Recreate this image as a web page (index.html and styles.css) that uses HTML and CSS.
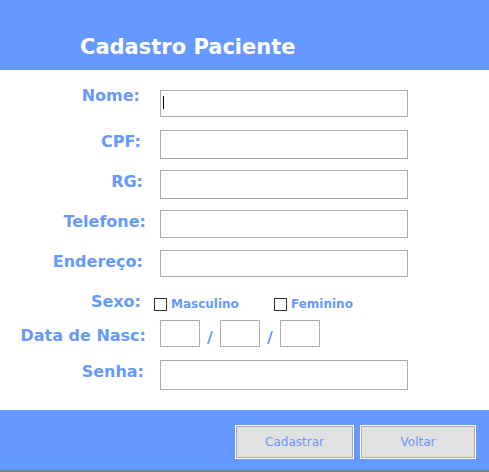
FILE: index.html
```html
<!DOCTYPE html>
<html lang="pt-BR">
<head>
<meta charset="utf-8">
<title>Cadastro Paciente</title>
<link rel="stylesheet" href="styles.css">
</head>
<body>
<div class="window">
  <header class="header">
    <h1 class="title">Cadastro Paciente</h1>
  </header>
  <main class="form">
    <div class="row">
      <label class="label label--nome">Nome:</label>
      <div class="field">
        <input class="text text--short" type="text">
        <span class="caret"></span>
      </div>
    </div>
    <div class="row">
      <label class="label label--cpf">CPF:</label>
      <input class="text text--tall" type="text">
    </div>
    <div class="row">
      <label class="label">RG:</label>
      <input class="text text--tall" type="text">
    </div>
    <div class="row">
      <label class="label label--wide">Telefone:</label>
      <input class="text" type="text">
    </div>
    <div class="row">
      <label class="label">Endereço:</label>
      <input class="text text--short" type="text">
    </div>
    <div class="row row--sexo">
      <label class="label label--cpf">Sexo:</label>
      <div class="options">
        <span class="option option--first"><span class="check"></span><span class="option-text">Masculino</span></span>
        <span class="option"><span class="check"></span><span class="option-text">Feminino</span></span>
      </div>
    </div>
    <div class="row">
      <label class="label label--wide label--data">Data de Nasc:</label>
      <div class="date">
        <input class="text text--date" type="text">
        <span class="slash">/</span>
        <input class="text text--date" type="text">
        <span class="slash">/</span>
        <input class="text text--date" type="text">
      </div>
    </div>
    <div class="row">
      <label class="label label--senha">Senha:</label>
      <input class="text text--senha" type="password">
    </div>
  </main>
  <footer class="footer">
    <button class="btn btn--cadastrar" type="button">Cadastrar</button>
    <button class="btn btn--voltar" type="button">Voltar</button>
  </footer>
</div>
</body>
</html>
```
FILE: styles.css
```css
* { box-sizing: border-box; }

html, body {
  margin: 0;
  padding: 0;
  background: #ffffff;
}

.window {
  width: 489px;
  height: 472px;
  display: flex;
  flex-direction: column;
  font-family: "DejaVu Sans", sans-serif;
}

.header {
  height: 70px;
  background: #6699ff;
  padding: 35px 0 0 80px;
}

.title {
  margin: 0;
  font-size: 21px;
  line-height: 25px;
  font-weight: bold;
  color: #ffffff;
}

.form {
  height: 340px;
  padding-top: 20px;
  display: flex;
  flex-direction: column;
}

.row {
  display: flex;
  align-items: flex-start;
  height: 40px;
}

.row--sexo {
  height: 30px;
}

.label {
  width: 160px;
  flex: none;
  text-align: right;
  padding-right: 17px;
  margin-top: 3px;
  font-size: 16px;
  line-height: 18px;
  font-weight: bold;
  color: #6699ff;
}

.label--nome { padding-right: 20px; margin-top: -3px; }
.label--cpf { padding-right: 19px; }
.label--wide { padding-right: 14px; }
.label--senha { padding-right: 16px; }
.label--data { margin-top: 7px; }

.field {
  position: relative;
}

.text {
  display: block;
  width: 248px;
  height: 28px;
  margin: 0;
  padding: 0 3px;
  border: 1px solid #ababab;
  background: #ffffff;
  outline: none;
  font-family: "DejaVu Sans", sans-serif;
  font-size: 12px;
}

.text--short { height: 27px; }
.text--tall { height: 29px; }
.text--senha { height: 30px; }
.text--date { width: 40px; height: 27px; }

.caret {
  position: absolute;
  left: 3px;
  top: 6px;
  width: 1px;
  height: 13px;
  background: #000000;
}

.options {
  display: flex;
  align-items: center;
  margin-left: -6px;
  margin-top: 7px;
}

.option {
  display: flex;
  align-items: center;
  gap: 4px;
}

.option--first {
  width: 120px;
}

.check {
  width: 13px;
  height: 13px;
  border: 1px solid #333333;
  background: #ffffff;
}

.option-text {
  font-size: 12px;
  line-height: 14px;
  font-weight: bold;
  color: #6699ff;
}

.date {
  display: flex;
  align-items: flex-start;
}

.slash {
  width: 20px;
  text-align: center;
  padding-top: 9px;
  font-size: 16px;
  line-height: 18px;
  font-weight: bold;
  color: #6699ff;
}

.footer {
  height: 62px;
  background: #6699ff;
  border-bottom: 2px solid #7f7f7f;
  display: flex;
  justify-content: flex-end;
  align-items: flex-start;
  gap: 6px;
  padding: 15px 13px 0 0;
}

.btn {
  height: 34px;
  margin: 0;
  padding: 0;
  border: 1px solid #ffffff;
  box-shadow: inset 0 0 0 1px #adadad;
  background: #e1e1e1;
  color: #6699ff;
  font-family: "DejaVu Sans", sans-serif;
  font-size: 12px;
}

.btn--cadastrar { width: 119px; }
.btn--voltar { width: 116px; }
```
